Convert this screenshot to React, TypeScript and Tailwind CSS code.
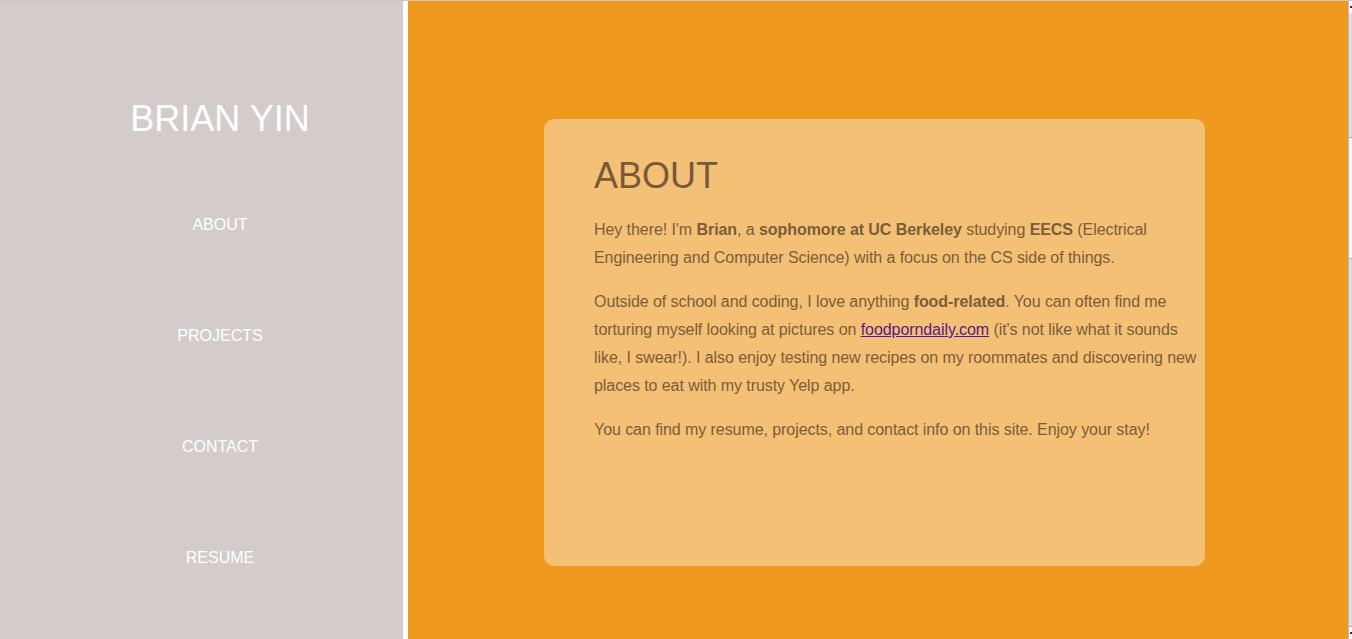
const navItems = ["ABOUT", "PROJECTS", "CONTACT", "RESUME"];

export default function App() {
  return (
    <div
      className="flex h-[639px] w-[1352px] overflow-hidden border-t border-[#c9c6c4] bg-white"
      style={{ fontFamily: '"Liberation Sans", Arial, sans-serif' }}
    >
      {/* Sidebar */}
      <aside className="flex w-[403px] shrink-0 flex-col bg-[#d4cccb] pl-[37px] pt-[97px] text-white">
        <h1 className="text-center text-[36px] leading-[41px]">BRIAN YIN</h1>
        <nav className="mt-[30px] flex flex-col">
          {navItems.map((item) => (
            <a
              key={item}
              href="#"
              className="flex h-[111px] items-center justify-center text-[16px]"
            >
              {item}
            </a>
          ))}
        </nav>
      </aside>

      {/* White gutter */}
      <div className="w-[5px] shrink-0 bg-white" />

      {/* Main content */}
      <main className="flex-1 bg-[#ef991f] pl-[136px] pt-[118px]">
        <section className="h-[447px] w-[661px] rounded-[10px] bg-[#f4c076] pl-[50px] pr-[4px] pt-[36px] text-[16px] leading-[28px] text-[#7b5d39]">
          <h2 className="text-[36px] leading-[41px] text-[#765a3a]">ABOUT</h2>
          <div className="tracking-[-0.07px]">
            <p className="mt-[20px]">
              Hey there! I'm <b>Brian</b>, a <b>sophomore at UC Berkeley</b> studying{" "}
              <b>EECS</b> (Electrical Engineering and Computer Science) with a focus on the CS
              side of things.
            </p>
            <p className="mt-[16px]">
              Outside of school and coding, I love anything <b>food-related</b>. You can often
              find me torturing myself looking at pictures on{" "}
              <a href="#" className="text-[#551a8b] underline">
                foodporndaily.com
              </a>{" "}
              (it's not like what it sounds like, I swear!). I also enjoy testing new recipes on
              my roommates and discovering new places to eat with my trusty Yelp app.
            </p>
            <p className="mt-[16px]">
              You can find my resume, projects, and contact info on this site. Enjoy your stay!
            </p>
          </div>
        </section>
      </main>

      {/* Clipped scrollbar */}
      <div className="flex w-[4px] shrink-0 flex-col border-l border-[#bdbdbd]">
        <div className="flex h-[12px] items-center justify-end bg-white">
          <span className="h-[2px] w-[2px] bg-[#333]" />
        </div>
        <div className="h-[124px] bg-[#dcdcdc]" />
        <div className="h-[122px] border-y border-[#a9a9a9] bg-[#f7f7f7]" />
        <div className="flex-1 bg-[#dcdcdc]" />
        <div className="flex h-[13px] items-center justify-end border-t border-[#a9a9a9] bg-white">
          <span className="h-[2px] w-[2px] bg-[#333]" />
        </div>
      </div>
    </div>
  );
}
